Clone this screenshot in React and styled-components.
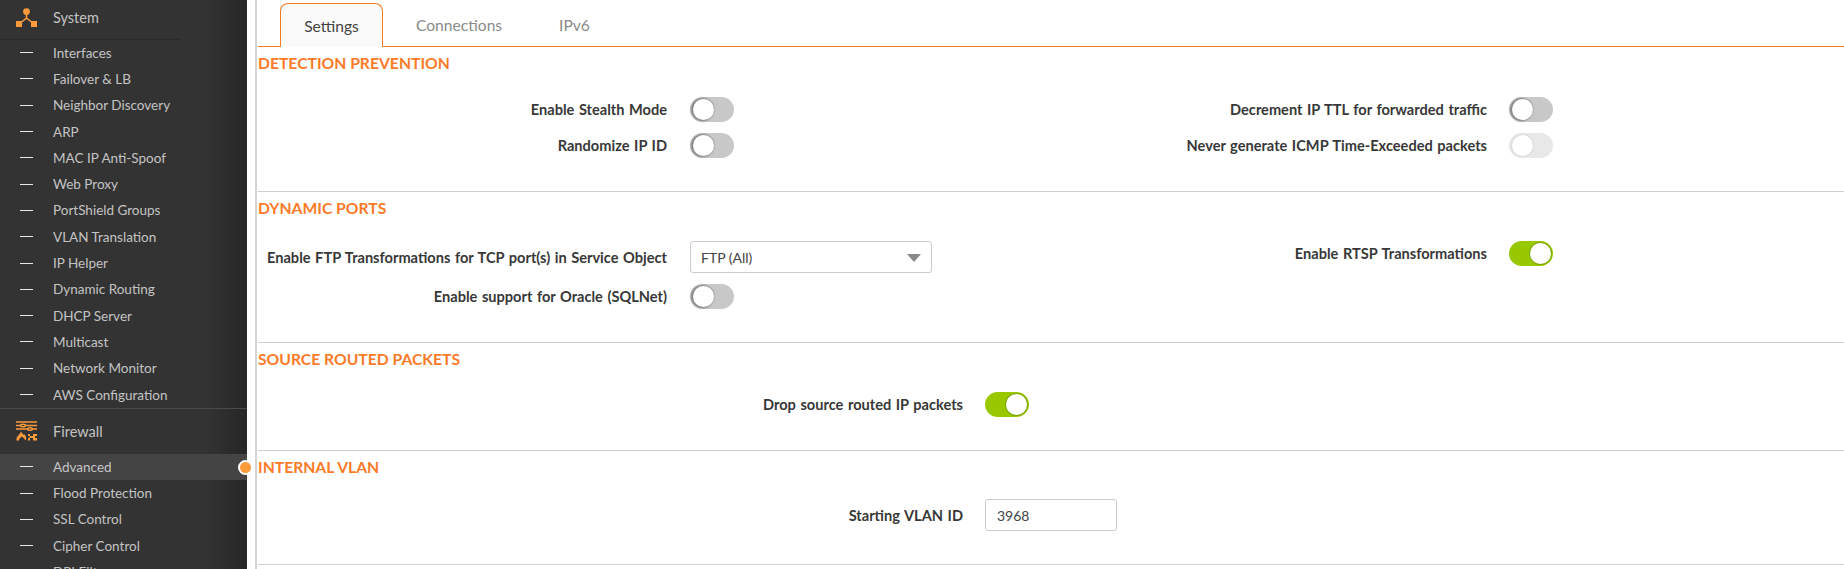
import React from 'react'
import styled, { createGlobalStyle } from 'styled-components'

const GlobalStyle = createGlobalStyle`
  html, body {
    margin: 0;
    height: 100%;
    overflow: hidden;
    background: #fff;
    font-family: "Lato", "Noto Sans", sans-serif;
  }
`

const SystemIcon = () => (
  <svg width="21" height="20" viewBox="0 0 21 20">
    <circle cx="10.5" cy="3.6" r="3.4" fill="#fd9a3c" />
    <path d="M10.5 6 V10 L3 16 M10.5 10 L18 16" stroke="#fd9a3c" strokeWidth="1.6" fill="none" />
    <rect x="0" y="13" width="6" height="6" fill="#fd9a3c" />
    <rect x="15" y="13" width="6" height="6" fill="#fd9a3c" />
  </svg>
)

const FirewallIcon = () => (
  <svg width="21" height="20" viewBox="0 0 21 20">
    <g stroke="#fd9a3c" fill="none" strokeWidth="1.4">
      <path d="M0 1 H21 M0 4.5 H5 M9 4.5 H21 M0 8 H12 M16 8 H21" />
      <ellipse cx="7" cy="4.5" rx="2.4" ry="1.3" />
      <ellipse cx="14" cy="8" rx="2.4" ry="1.3" />
    </g>
    <path d="M0.5 19.5 C-0.2 15.5 3 15 5 10.5 C6.5 13 7 14 8.5 13.5 C10.5 15.5 10.5 18 9.5 19.5 C8.5 17.5 7.5 16.5 5.5 15.5 C4.5 17 3 17.5 3 19.5 Z" fill="#fd9a3c" />
    <path d="M12 13 H14 V15 H17 V13 H21 V15 H19 V17 H21 V19.5 H17 V17 H14 V19.5 H12 V17 H13.5 V15 H12 Z" fill="#fd9a3c" />
  </svg>
)

const navSystem = [
  'Interfaces',
  'Failover & LB',
  'Neighbor Discovery',
  'ARP',
  'MAC IP Anti-Spoof',
  'Web Proxy',
  'PortShield Groups',
  'VLAN Translation',
  'IP Helper',
  'Dynamic Routing',
  'DHCP Server',
  'Multicast',
  'Network Monitor',
  'AWS Configuration',
]
const navFirewall = ['Advanced', 'Flood Protection', 'SSL Control', 'Cipher Control', 'DPI Filters']

const Switch = ({ on, disabled }) => (
  <Track $on={on} $disabled={disabled}>
    <Knob $on={on} $disabled={disabled} />
  </Track>
)

const App = () => {
  return (
    <Page>
      <GlobalStyle />
      <Sidebar>
        <GroupHead $height={39} $lift={4}>
          <GroupIcon>
            <SystemIcon />
          </GroupIcon>
          System
        </GroupHead>
        <GroupRule $short />
        {navSystem.map(item => (
          <NavItem key={item}>
            <Dash />
            {item}
          </NavItem>
        ))}
        <GroupRule />
        <GroupHead $height={45} $lift={1}>
          <GroupIcon>
            <FirewallIcon />
          </GroupIcon>
          Firewall
        </GroupHead>
        {navFirewall.map((item, i) => (
          <NavItem key={item} $active={i === 0}>
            <Dash />
            {item}
            {i === 0 && <ActiveDot />}
          </NavItem>
        ))}
      </Sidebar>
      <Main>
        <Tabs>
          <Tab $active>Settings</Tab>
          <Tab>Connections</Tab>
          <Tab>IPv6</Tab>
        </Tabs>

        <Section $height={145}>
          <Heading $height={50}>DETECTION PREVENTION</Heading>
          <Columns>
            <Column>
              <Row $label={409} $gap={23}>
                <Label>Enable Stealth Mode</Label>
                <Switch />
              </Row>
              <Row $label={409} $gap={23}>
                <Label>Randomize IP ID</Label>
                <Switch />
              </Row>
            </Column>
            <Column>
              <Row $label={436}>
                <Label>Decrement IP TTL for forwarded traffic</Label>
                <Switch />
              </Row>
              <Row $label={436}>
                <Label>Never generate ICMP Time-Exceeded packets</Label>
                <Switch disabled />
              </Row>
            </Column>
          </Columns>
        </Section>

        <Section $height={151}>
          <Heading>DYNAMIC PORTS</Heading>
          <Columns>
            <Column>
              <Row $label={409} $gap={23} $tall>
                <Label>Enable FTP Transformations for TCP port(s) in Service Object</Label>
                <SelectBox>
                  FTP (All)
                  <Caret />
                </SelectBox>
              </Row>
              <Row $label={409} $gap={23}>
                <Label>Enable support for Oracle (SQLNet)</Label>
                <Switch />
              </Row>
            </Column>
            <Column>
              <Row $label={436}>
                <Label>Enable RTSP Transformations</Label>
                <Switch on />
              </Row>
            </Column>
          </Columns>
        </Section>

        <Section $height={108}>
          <Heading>SOURCE ROUTED PACKETS</Heading>
          <Row $label={705}>
            <Label>Drop source routed IP packets</Label>
            <Switch on />
          </Row>
        </Section>

        <Section $height={114}>
          <Heading $height={48}>INTERNAL VLAN</Heading>
          <Row $label={705} $tall>
            <Label>Starting VLAN ID</Label>
            <TextBox>3968</TextBox>
          </Row>
        </Section>
      </Main>
    </Page>
  )
}

export default App

const Page = styled.div`
  display: flex;
  width: 1844px;
  height: 569px;
  overflow: hidden;
`
const Sidebar = styled.nav`
  flex: 0 0 247px;
  position: relative;
  background: linear-gradient(to right, #333 0, #333 205px, #262626 247px);
  color: #c4c4c4;
  font-size: 13.5px;
`
const GroupHead = styled.div`
  display: flex;
  align-items: center;
  box-sizing: border-box;
  height: ${p => p.$height}px;
  padding-bottom: ${p => p.$lift}px;
  font-size: 14.5px;
`
const GroupIcon = styled.span`
  display: flex;
  justify-content: center;
  width: 53px;
  padding-right: 1px;
  box-sizing: border-box;
`
const GroupRule = styled.div`
  height: 1px;
  width: ${p => (p.$short ? '180px' : '100%')};
  background: ${p => (p.$short ? '#2a2a2a' : '#4a4a4a')};
`
const NavItem = styled.div`
  position: relative;
  display: flex;
  align-items: center;
  box-sizing: border-box;
  height: 26.3px;
  padding-bottom: 1px;
  background: ${p => (p.$active ? '#444' : 'transparent')};
`
const Dash = styled.span`
  display: block;
  width: 13px;
  height: 1px;
  margin: 0 20px;
  background: #e8e8e8;
`
const ActiveDot = styled.span`
  position: absolute;
  left: 238px;
  top: 6px;
  width: 11px;
  height: 11px;
  border: 2px solid #fff;
  border-radius: 50%;
  background: #fd9a3c;
  z-index: 2;
`
const Main = styled.main`
  flex: 1;
  margin-left: 8px;
  padding-left: 1px;
  border-left: 2px solid #d4d4d4;
  color: #333;
`
const Tabs = styled.div`
  display: flex;
  align-items: flex-end;
  height: 46px;
  padding-left: 22px;
  border-bottom: 1px solid #f47b20;
`
const Tab = styled.div`
  display: flex;
  align-items: center;
  justify-content: center;
  box-sizing: border-box;
  height: ${p => (p.$active ? '44px' : '43px')};
  width: ${p => (p.$active ? '103px' : 'auto')};
  padding: ${p => (p.$active ? '0' : '0 24px 0 33px')};
  font-size: 15.6px;
  color: ${p => (p.$active ? '#444' : '#8a8a8a')};
  background: ${p => (p.$active ? '#fafafa' : 'transparent')};
  border: ${p => (p.$active ? '1px solid #f47b20' : 'none')};
  border-bottom: none;
  border-radius: 8px 8px 0 0;
  margin-bottom: ${p => (p.$active ? '-1px' : '0')};
`
const Section = styled.section`
  box-sizing: border-box;
  height: ${p => p.$height}px;
  border-bottom: 1px solid #d0d0d0;
`
const Heading = styled.h3`
  margin: 0;
  height: ${p => p.$height || 49}px;
  padding-top: 7px;
  box-sizing: border-box;
  font-size: 15.7px;
  line-height: 18px;
  font-weight: 700;
  color: #fb7a28;
`
const Columns = styled.div`
  display: grid;
  grid-template-columns: 793px 1fr;
`
const Column = styled.div`
  display: flex;
  flex-direction: column;
`
const Row = styled.div`
  display: grid;
  grid-template-columns: ${p => p.$label}px auto;
  column-gap: ${p => p.$gap || 22}px;
  justify-content: start;
  align-items: center;
  height: ${p => (p.$tall ? '43px' : '36px')};
  padding-bottom: 11px;
  box-sizing: border-box;
`
const Label = styled.label`
  text-align: right;
  font-size: 14.6px;
  font-weight: 700;
  word-spacing: 1px;
  color: #383838;
  white-space: nowrap;
`
const Track = styled.span`
  position: relative;
  display: block;
  width: 44px;
  height: 25px;
  border-radius: 13px;
  background: ${p => (p.$on ? '#98c800' : p.$disabled ? '#e8e8e8' : '#c8c8c8')};
`
const Knob = styled.span`
  position: absolute;
  top: 2px;
  left: ${p => (p.$on ? '21px' : '3px')};
  width: 21px;
  height: 21px;
  box-sizing: border-box;
  border-radius: 50%;
  background: #fff;
  box-shadow: ${p =>
    p.$on ? '0 0 0 1px #7fa800' : p.$disabled ? '0 0 2px #bbb' : '-1px 0 2px 1px #808080'};
`
const SelectBox = styled.div`
  position: relative;
  display: flex;
  align-items: center;
  box-sizing: border-box;
  width: 242px;
  height: 32px;
  padding-left: 10px;
  border: 1px solid #ccc;
  border-radius: 3px;
  font-size: 14px;
  color: #444;
`
const Caret = styled.span`
  position: absolute;
  right: 10px;
  top: 12px;
  border-left: 7px solid transparent;
  border-right: 7px solid transparent;
  border-top: 8px solid #8a8a8a;
`
const TextBox = styled.div`
  display: flex;
  align-items: center;
  box-sizing: border-box;
  width: 132px;
  height: 32px;
  padding-left: 11px;
  border: 1px solid #ccc;
  border-radius: 3px;
  font-size: 14px;
  color: #444;
`
